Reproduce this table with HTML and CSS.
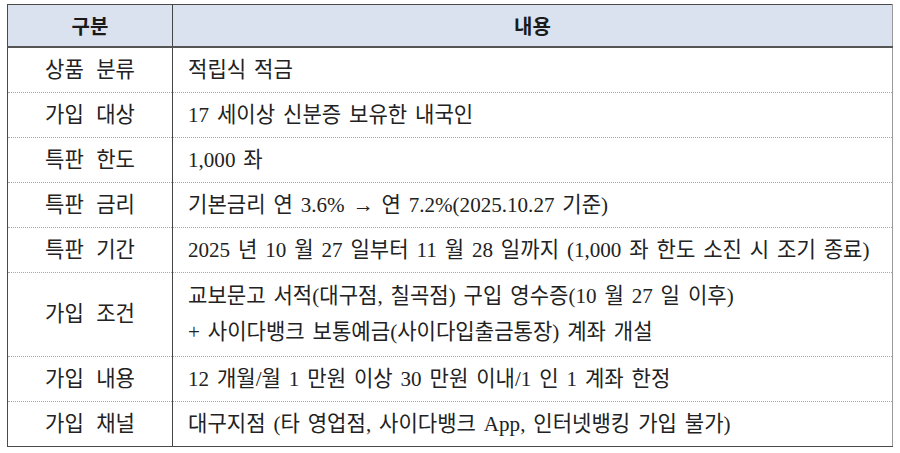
FILE: index.html
```html
<!DOCTYPE html>
<html lang="ko">
<head>
<meta charset="utf-8">
<title>특판 적금 안내</title>
<link rel="stylesheet" href="styles.css">
</head>
<body>
<table class="info">
  <colgroup>
    <col class="col-label">
    <col class="col-content">
  </colgroup>
  <thead>
    <tr>
      <th>구분</th>
      <th>내용</th>
    </tr>
  </thead>
  <tbody>
    <tr>
      <td class="label">상품 분류</td>
      <td class="content">적립식 적금</td>
    </tr>
    <tr>
      <td class="label">가입 대상</td>
      <td class="content">17 세이상 신분증 보유한 내국인</td>
    </tr>
    <tr>
      <td class="label">특판 한도</td>
      <td class="content">1,000 좌</td>
    </tr>
    <tr>
      <td class="label">특판 금리</td>
      <td class="content">기본금리 연 3.6% → 연 7.2%(2025.10.27 기준)</td>
    </tr>
    <tr>
      <td class="label">특판 기간</td>
      <td class="content">2025 년 10 월 27 일부터 11 월 28 일까지 (1,000 좌 한도 소진 시 조기 종료)</td>
    </tr>
    <tr class="multi">
      <td class="label">가입 조건</td>
      <td class="content">교보문고 서적(대구점, 칠곡점) 구입 영수증(10 월 27 일 이후)<br>+ 사이다뱅크 보통예금(사이다입출금통장) 계좌 개설</td>
    </tr>
    <tr>
      <td class="label">가입 내용</td>
      <td class="content">12 개월/월 1 만원 이상 30 만원 이내/1 인 1 계좌 한정</td>
    </tr>
    <tr>
      <td class="label">가입 채널</td>
      <td class="content">대구지점 (타 영업점, 사이다뱅크 App, 인터넷뱅킹 가입 불가)</td>
    </tr>
  </tbody>
</table>
</body>
</html>
```

FILE: styles.css
```css
html, body {
  margin: 0;
  padding: 0;
  background: #ffffff;
}

body {
  padding: 4px 0 0 7px;
}

.info {
  width: 886px;
  border-collapse: collapse;
  table-layout: fixed;
  border-top: 1px solid #4a4a4a;
  border-left: 1px solid #4a4a4a;
  border-right: 1px solid #9a9a9a;
  border-bottom: 1px solid #4a4a4a;
  color: #222222;
}

.col-label {
  width: 165px;
}

.info th {
  height: 41px;
  padding: 0;
  background: #d9e2ee;
  font-family: "Noto Sans CJK KR", "Liberation Sans", sans-serif;
  font-weight: 700;
  font-size: 20px;
  line-height: 41px;
  color: #1a1a1a;
  text-align: center;
  border-bottom: 2px solid #555555;
}

.info th:first-child {
  border-right: 1px solid #444444;
}

.info td {
  padding: 4px 0;
  font-family: "Liberation Serif", "Noto Sans CJK KR", serif;
  font-size: 22px;
  font-size-adjust: 0.44;
  line-height: 36px;
  word-spacing: 2.6px;
  border-bottom: 1px dotted #a8a8a8;
  vertical-align: middle;
  white-space: nowrap;
}

.info tbody tr:last-child td {
  border-bottom: 1px solid #4a4a4a;
}

.info td.label {
  text-align: center;
  word-spacing: 7px;
  border-right: 1px solid #444444;
}

.info td.content {
  padding-left: 15px;
  text-align: left;
}

.info tr.multi td {
  padding-top: 5px;
  padding-bottom: 6px;
}
```
